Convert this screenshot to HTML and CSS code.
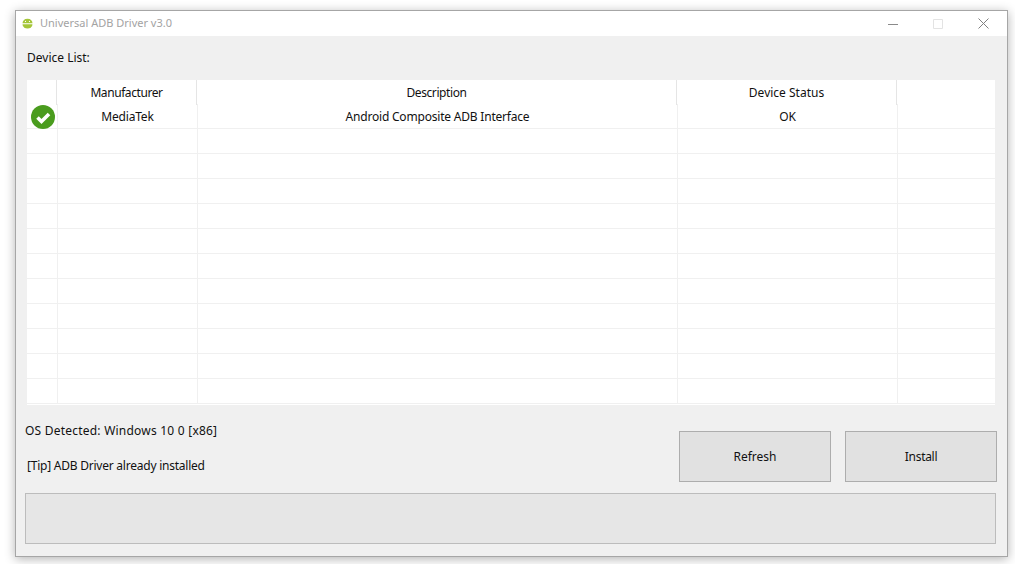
FILE: index.html
```html
<!DOCTYPE html>
<html lang="en">
<head>
<meta charset="utf-8">
<title>Universal ADB Driver v3.0</title>
<link rel="stylesheet" href="styles.css">
</head>
<body>
<div class="window">
  <header class="titlebar">
    <svg class="app-icon" width="11" height="11" viewBox="0 0 11 11"><path d="M.5 5.200A5 4.400 0 0 1 10.500 5.200Z" fill="#a4c639"/><path d="M.5 6.200H10.500A5 4.300 0 0 1 .5 6.200Z" fill="#a4c639"/><path d="M3 1L3.800 2M8 1L7.200 2" stroke="#a4c639" stroke-width=".7"/><circle cx="3.500" cy="3.400" r=".6" fill="#fff"/><circle cx="7.500" cy="3.400" r=".6" fill="#fff"/></svg>
    <span class="app-title">Universal ADB Driver v3.0</span>
    <div class="controls">
      <svg class="ctl ctl-min" width="10" height="10" viewBox="0 0 10 10"><path d="M0 5.500H10" stroke="#8a8a8a"/></svg>
      <svg class="ctl ctl-max" width="10" height="10" viewBox="0 0 10 10"><path d="M.5.500H9.500V9.500H.5Z" fill="none" stroke="#e3e3e3"/></svg>
      <svg class="ctl ctl-close" width="11" height="11" viewBox="0 0 11 11"><path d="M.5.500L10.500 10.500M10.500.500L.5 10.500" stroke="#808080" fill="none"/></svg>
    </div>
  </header>
  <main class="content">
    <div class="list-label">Device List:</div>
    <div class="table">
      <div class="head">
        <div class="hc"></div><div class="hc hc-tight">Manufacturer</div><div class="hc hc-tight">Description</div><div class="hc">Device Status</div><div class="hc hc-last"></div>
      </div>
      <div class="row">
        <div class="c c-icon">
          <svg width="24" height="24" viewBox="0 0 24 24"><circle cx="12" cy="12" r="12" fill="#4a9c1e"/><path d="M6.500 12.500L10.500 16.500L18 9" fill="none" stroke="#fff" stroke-width="3.600"/></svg>
        </div>
        <div class="c">MediaTek</div><div class="c">Android Composite ADB Interface</div><div class="c">OK</div><div class="c"></div>
      </div>
      <div class="row"><div class="c"></div><div class="c"></div><div class="c"></div><div class="c"></div><div class="c"></div></div>
      <div class="row"><div class="c"></div><div class="c"></div><div class="c"></div><div class="c"></div><div class="c"></div></div>
      <div class="row"><div class="c"></div><div class="c"></div><div class="c"></div><div class="c"></div><div class="c"></div></div>
      <div class="row"><div class="c"></div><div class="c"></div><div class="c"></div><div class="c"></div><div class="c"></div></div>
      <div class="row"><div class="c"></div><div class="c"></div><div class="c"></div><div class="c"></div><div class="c"></div></div>
      <div class="row"><div class="c"></div><div class="c"></div><div class="c"></div><div class="c"></div><div class="c"></div></div>
      <div class="row"><div class="c"></div><div class="c"></div><div class="c"></div><div class="c"></div><div class="c"></div></div>
      <div class="row"><div class="c"></div><div class="c"></div><div class="c"></div><div class="c"></div><div class="c"></div></div>
      <div class="row"><div class="c"></div><div class="c"></div><div class="c"></div><div class="c"></div><div class="c"></div></div>
      <div class="row"><div class="c"></div><div class="c"></div><div class="c"></div><div class="c"></div><div class="c"></div></div>
      <div class="row row-cut"><div class="c"></div><div class="c"></div><div class="c"></div><div class="c"></div><div class="c"></div></div>
    </div>
    <div class="bottom">
      <div class="info">
        <div class="os">OS Detected: Windows 10 0 [x86]</div>
        <div class="tip">[Tip] ADB Driver already installed</div>
      </div>
      <div class="buttons">
        <button class="btn" type="button">Refresh</button>
        <button class="btn btn-install" type="button">Install</button>
      </div>
    </div>
    <div class="progress"></div>
  </main>
</div>
</body>
</html>
```

FILE: styles.css
```css
html, body {
  margin: 0;
  padding: 0;
  height: 100%;
  background: #fff;
  overflow: hidden;
}
body {
  padding: 10px 0 0 15px;
  box-sizing: border-box;
  font-family: "Noto Sans", sans-serif;
  font-size: 12px;
  color: #111;
}
.window {
  width: 993px;
  height: 547px;
  box-sizing: border-box;
  border: 1px solid #a6a6a6;
  background: #f0f0f0;
  box-shadow: 0 2px 10px rgba(0, 0, 0, 0.3);
  display: flex;
  flex-direction: column;
}
.titlebar {
  height: 25px;
  background: #fff;
  display: flex;
  align-items: center;
  padding-left: 6px;
  flex: none;
}
.app-title {
  margin-left: 7px;
  padding-bottom: 2px;
  font-size: 11px;
  color: #a3a3a3;
}
.controls {
  margin-left: auto;
  display: flex;
  align-items: center;
}
.ctl { display: block; }
.ctl-min { margin-right: 35px; }
.ctl-max { margin-right: 35px; }
.ctl-close { margin-right: 18px; }
.content {
  flex: 1;
  position: relative;
  padding: 0 11px 0 9px;
  display: flex;
  flex-direction: column;
}
.list-label {
  height: 44px;
  line-height: 44px;
  padding-left: 2px;
}
.table {
  margin-left: 2px;
  width: 968px;
  height: 325px;
  background: #fff;
  overflow: hidden;
  flex: none;
}
.head {
  display: grid;
  grid-template-columns: 30px 140px 480px 220px 1fr;
  height: 24px;
}
.hc {
  border-right: 1px solid #e5e5e5;
  text-align: center;
  line-height: 25px;
}
.hc-tight { letter-spacing: -0.42px; }
.hc-last { border-right: 0; }
.row {
  display: grid;
  grid-template-columns: 31px 140px 480px 220px 1fr;
  height: 25px;
  box-sizing: border-box;
  border-bottom: 1px solid #f0f0f0;
}
.c {
  border-right: 1px solid #f0f0f0;
  text-align: center;
  line-height: 25px;
  letter-spacing: -0.2px;
}
.c:last-child { border-right: 0; }
.c-icon {
  display: flex;
  align-items: center;
  padding-left: 4px;
}
.bottom {
  display: flex;
  justify-content: space-between;
  height: 88px;
  flex: none;
}
.os { margin-top: 18px; line-height: 16px; letter-spacing: 0.22px; }
.tip { margin-top: 19px; margin-left: 2px; line-height: 16px; letter-spacing: -0.23px; }
.buttons {
  display: flex;
  gap: 14px;
  margin-top: 26px;
  margin-right: -1px;
}
.btn {
  width: 152px;
  height: 51px;
  box-sizing: border-box;
  border: 1px solid #adadad;
  background: #e1e1e1;
  color: #111;
  font: inherit;
  padding: 0;
}
.btn-install { letter-spacing: -0.3px; }
.progress {
  height: 51px;
  width: 971px;
  box-sizing: border-box;
  border: 1px solid #bcbcbc;
  background: #e6e6e6;
  flex: none;
}
```
